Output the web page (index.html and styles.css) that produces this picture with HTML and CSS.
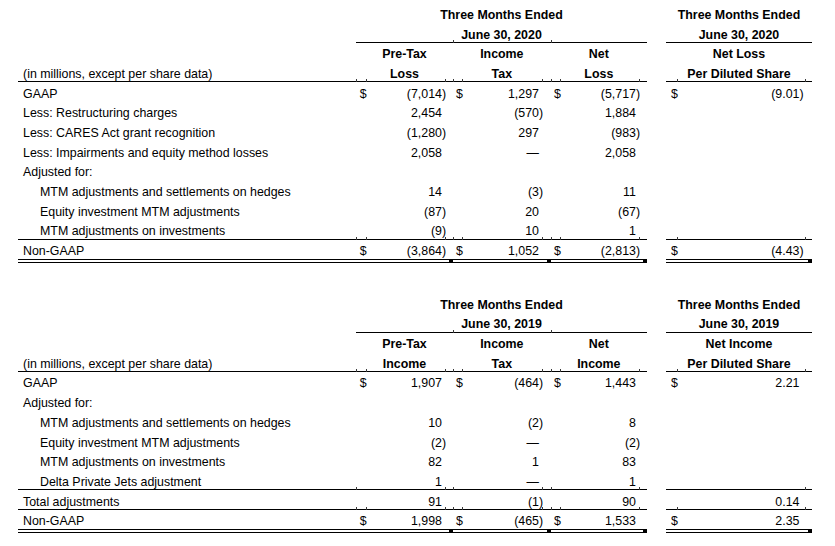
FILE: index.html
```html
<!DOCTYPE html>
<html lang="en">
<head>
<meta charset="utf-8">
<title>Non-GAAP Reconciliation</title>
<link rel="stylesheet" href="styles.css">
</head>
<body>
<div class="page">

<div class="tbl">
  <div class="r h"><span class="l"></span><span class="c3">Three Months Ended</span><span class="g"></span><span class="c1">Three Months Ended</span></div>
  <div class="r h"><span class="l"></span><span class="c3 bb">June 30, 2020</span><span class="g"></span><span class="c1 bb">June 30, 2020</span></div>
  <div class="r h"><span class="l"></span><span class="c1">Pre-Tax</span><span class="c1 ta">Income</span><span class="c1 ta">Net</span><span class="g"></span><span class="c1">Net Loss</span></div>
  <div class="r h bl"><span class="l">(in millions, except per share data)</span><span class="c1">Loss</span><span class="c1">Tax</span><span class="c1">Loss</span><span class="g"></span><span class="c1">Per Diluted Share</span></div>

  <div class="r tt"><span class="l">GAAP</span><span class="d">$</span><span class="v">(7,014</span><span class="p">)</span><span class="s"></span><span class="d">$</span><span class="v">1,297</span><span class="p"></span><span class="s"></span><span class="d">$</span><span class="v">(5,717</span><span class="p">)</span><span class="s"></span><span class="g"></span><span class="d">$</span><span class="v">(9.01</span><span class="p">)</span><span class="s"></span></div>
  <div class="r"><span class="l">Less: Restructuring charges</span><span class="d"></span><span class="v">2,454</span><span class="p"></span><span class="s"></span><span class="d"></span><span class="v">(570</span><span class="p">)</span><span class="s"></span><span class="d"></span><span class="v">1,884</span><span class="p"></span><span class="s"></span></div>
  <div class="r"><span class="l">Less: CARES Act grant recognition</span><span class="d"></span><span class="v">(1,280</span><span class="p">)</span><span class="s"></span><span class="d"></span><span class="v">297</span><span class="p"></span><span class="s"></span><span class="d"></span><span class="v">(983</span><span class="p">)</span><span class="s"></span></div>
  <div class="r"><span class="l">Less: Impairments and equity method losses</span><span class="d"></span><span class="v">2,058</span><span class="p"></span><span class="s"></span><span class="d"></span><span class="v">—</span><span class="p"></span><span class="s"></span><span class="d"></span><span class="v">2,058</span><span class="p"></span><span class="s"></span></div>
  <div class="r"><span class="l">Adjusted for:</span></div>
  <div class="r"><span class="l in">MTM adjustments and settlements on hedges</span><span class="d"></span><span class="v">14</span><span class="p"></span><span class="s"></span><span class="d"></span><span class="v">(3</span><span class="p">)</span><span class="s"></span><span class="d"></span><span class="v">11</span><span class="p"></span><span class="s"></span></div>
  <div class="r"><span class="l in">Equity investment MTM adjustments</span><span class="d"></span><span class="v">(87</span><span class="p">)</span><span class="s"></span><span class="d"></span><span class="v">20</span><span class="p"></span><span class="s"></span><span class="d"></span><span class="v">(67</span><span class="p">)</span><span class="s"></span></div>
  <div class="r bl"><span class="l in">MTM adjustments on investments</span><span class="d"></span><span class="v">(9</span><span class="p">)</span><span class="s"></span><span class="d"></span><span class="v">10</span><span class="p"></span><span class="s"></span><span class="d"></span><span class="v">1</span><span class="p"></span><span class="s"></span><span class="g"></span><span class="d"></span><span class="v"></span><span class="p"></span><span class="s"></span></div>
  <div class="r tt dl"><span class="l">Non-GAAP</span><span class="d">$</span><span class="v">(3,864</span><span class="p">)</span><span class="s"></span><span class="d">$</span><span class="v">1,052</span><span class="p"></span><span class="s"></span><span class="d">$</span><span class="v">(2,813</span><span class="p">)</span><span class="s"></span><span class="g"></span><span class="d">$</span><span class="v">(4.43</span><span class="p">)</span><span class="s"></span></div>
</div>

<div class="tbl">
  <div class="r h"><span class="l"></span><span class="c3">Three Months Ended</span><span class="g"></span><span class="c1">Three Months Ended</span></div>
  <div class="r h"><span class="l"></span><span class="c3 bb">June 30, 2019</span><span class="g"></span><span class="c1 bb">June 30, 2019</span></div>
  <div class="r h"><span class="l"></span><span class="c1">Pre-Tax</span><span class="c1 ta">Income</span><span class="c1 ta">Net</span><span class="g"></span><span class="c1">Net Income</span></div>
  <div class="r h bl"><span class="l">(in millions, except per share data)</span><span class="c1">Income</span><span class="c1">Tax</span><span class="c1">Income</span><span class="g"></span><span class="c1">Per Diluted Share</span></div>

  <div class="r tt"><span class="l">GAAP</span><span class="d">$</span><span class="v">1,907</span><span class="p"></span><span class="s"></span><span class="d">$</span><span class="v">(464</span><span class="p">)</span><span class="s"></span><span class="d">$</span><span class="v">1,443</span><span class="p"></span><span class="s"></span><span class="g"></span><span class="d">$</span><span class="v">2.21</span><span class="p"></span><span class="s"></span></div>
  <div class="r"><span class="l">Adjusted for:</span></div>
  <div class="r"><span class="l in">MTM adjustments and settlements on hedges</span><span class="d"></span><span class="v">10</span><span class="p"></span><span class="s"></span><span class="d"></span><span class="v">(2</span><span class="p">)</span><span class="s"></span><span class="d"></span><span class="v">8</span><span class="p"></span><span class="s"></span></div>
  <div class="r"><span class="l in">Equity investment MTM adjustments</span><span class="d"></span><span class="v">(2</span><span class="p">)</span><span class="s"></span><span class="d"></span><span class="v">—</span><span class="p"></span><span class="s"></span><span class="d"></span><span class="v">(2</span><span class="p">)</span><span class="s"></span></div>
  <div class="r"><span class="l in">MTM adjustments on investments</span><span class="d"></span><span class="v">82</span><span class="p"></span><span class="s"></span><span class="d"></span><span class="v">1</span><span class="p"></span><span class="s"></span><span class="d"></span><span class="v">83</span><span class="p"></span><span class="s"></span></div>
  <div class="r bl"><span class="l in">Delta Private Jets adjustment</span><span class="d"></span><span class="v">1</span><span class="p"></span><span class="s"></span><span class="d"></span><span class="v">—</span><span class="p"></span><span class="s"></span><span class="d"></span><span class="v">1</span><span class="p"></span><span class="s"></span><span class="g"></span><span class="d"></span><span class="v"></span><span class="p"></span><span class="s"></span></div>
  <div class="r bl tc"><span class="l">Total adjustments</span><span class="d"></span><span class="v">91</span><span class="p"></span><span class="s"></span><span class="d"></span><span class="v">(1</span><span class="p">)</span><span class="s"></span><span class="d"></span><span class="v">90</span><span class="p"></span><span class="s"></span><span class="g"></span><span class="d"></span><span class="v">0.14</span><span class="p"></span><span class="s"></span></div>
  <div class="r tt dl"><span class="l">Non-GAAP</span><span class="d">$</span><span class="v">1,998</span><span class="p"></span><span class="s"></span><span class="d">$</span><span class="v">(465</span><span class="p">)</span><span class="s"></span><span class="d">$</span><span class="v">1,533</span><span class="p"></span><span class="s"></span><span class="g"></span><span class="d">$</span><span class="v">2.35</span><span class="p"></span><span class="s"></span></div>
</div>

</div>
</body>
</html>
```

FILE: styles.css
```css
* {
  box-sizing: border-box;
  margin: 0;
  padding: 0;
}

body {
  margin: 0;
  background: #ffffff;
  color: #000000;
  font-family: "Liberation Sans", Arial, sans-serif;
  font-size: 12.4px;
}

.page {
  padding: 3.4px 0 0 18px;
}

.tbl + .tbl {
  margin-top: 29.9px;
}

.r {
  display: grid;
  grid-template-columns:
    338px
    10.7px 75.3px 4.5px 6.5px
    10px 76px 4.5px 7.2px
    10.3px 75px 4.5px 6.5px
    19px
    12px 121.5px 7px 5.5px;
  grid-template-rows: 19.7px;
  width: 794px;
}

.r > span {
  position: relative;
  padding-top: 2.5px;
  line-height: 19.7px;
  white-space: nowrap;
}

.l {
  padding-left: 5px;
}

.r > .l.in {
  padding-left: 22px;
}

.d,
.v {
  text-align: right;
}

.p {
  text-align: left;
}

.h {
  font-weight: bold;
}

.h > span {
  text-align: center;
}

.h > .l {
  text-align: left;
  font-weight: normal;
}

.c3 {
  grid-column: span 12;
}

.c1 {
  grid-column: span 4;
}

.r > .bb,
.bl > span:not(.g) {
  border-bottom: 1px solid #000;
}

.dl {
  grid-template-rows: 23.7px;
}

.dl > span:not(.g) {
  border-bottom: 4px double #000;
}

/* small tick marks where cell borders meet */
.tt .d::before,
.tt .d::after,
.tt .p::after,
.tc .d::before,
.tc .p::after,
.ta::before {
  content: "";
  position: absolute;
  top: -3px;
  width: 1px;
  height: 3px;
  background: #3a3a3a;
}

.tt .d::before,
.tc .d::before,
.ta::before {
  left: 0;
}

.tt .d::after,
.tt .p::after,
.tc .p::after {
  right: 0;
}

.tt .g + .d::before,
.tc .g + .d::before {
  display: none;
}

/* square joints on the double underline */
.dl .s::after {
  content: "";
  position: absolute;
  right: 0;
  bottom: -4px;
  width: 4px;
  height: 4px;
  background: #000;
}
```
